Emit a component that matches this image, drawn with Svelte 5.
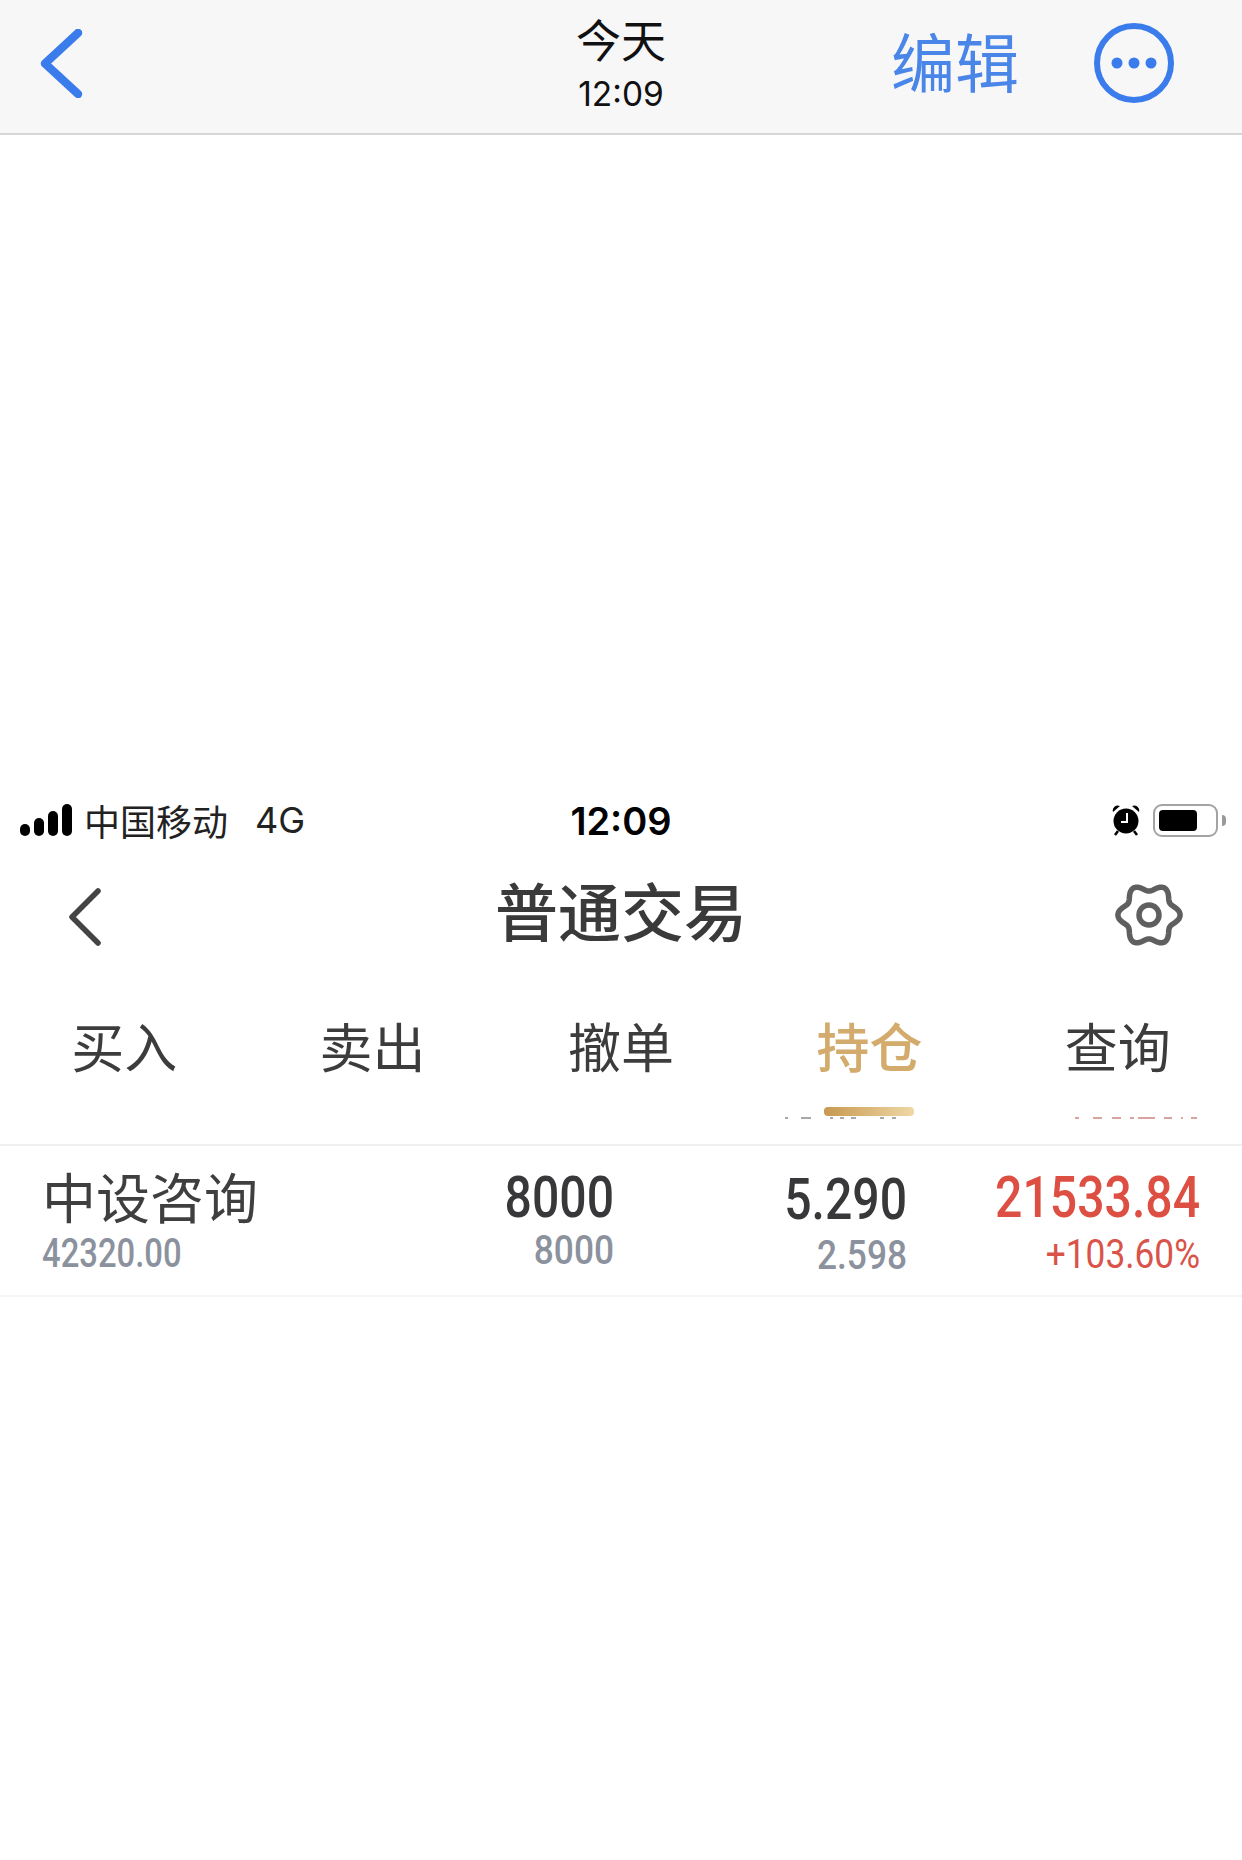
<script lang="ts">
  const tabs = ['买入', '卖出', '撤单', '持仓', '查询'];
  const activeTab = '持仓';

  // bottoms of a scrolled-away row, clipped by the tab bar: [x, width]
  const clippedGray = [[785, 3], [801, 10], [830, 3], [840, 4], [851, 5], [880, 4], [892, 4]];
  const clippedRed = [[1075, 4], [1093, 9], [1112, 9], [1130, 4], [1138, 17], [1164, 8], [1181, 2], [1191, 6]];

  // six soft lobes, one on each side
  let gearPoints = '';
  for (let i = 0; i < 180; i++) {
    const a = (i / 180) * Math.PI * 2;
    const r = 27.5 + 3.6 * Math.cos(6 * a);
    gearPoints += `${(34 + r * Math.cos(a)).toFixed(2)},${(32 + r * Math.sin(a)).toFixed(2)} `;
  }
</script>

<div class="page">
  <header class="msg-bar">
    <div class="left">
      <svg class="msg-back" viewBox="0 0 43 69" aria-hidden="true">
        <path d="M38 4 L5 34.5 L38 65" />
      </svg>
    </div>
    <div class="msg-title">
      <div class="today">今天</div>
      <div class="msg-time">12:09</div>
    </div>
    <div class="right">
      <span class="edit">编辑</span>
      <svg class="more" viewBox="0 0 80 80" aria-hidden="true">
        <circle class="ring" cx="40" cy="40" r="37" />
        <circle cx="23" cy="40" r="5.5" />
        <circle cx="40" cy="40" r="5.5" />
        <circle cx="57" cy="40" r="5.5" />
      </svg>
    </div>
  </header>

  <div class="blank"></div>

  <div class="status">
    <div class="left carrier">
      <span class="signal">
        <i style="height:12px"></i>
        <i style="height:18px"></i>
        <i style="height:25px"></i>
        <i style="height:32px"></i>
      </span>
      <span class="carrier-name">中国移动</span>
      <span class="net">4G</span>
    </div>
    <div class="clock">12:09</div>
    <div class="right status-icons">
      <svg class="alarm" viewBox="0 0 28 32" aria-hidden="true">
        <path d="M1 8 A5 5 0 0 1 8 2 Z M27 8 A5 5 0 0 0 20 2 Z" />
        <path class="feet" d="M6 27 L3 31 M22 27 L25 31" />
        <circle cx="14" cy="17" r="12.5" />
        <path class="hands" d="M15 9 V18 H9" />
      </svg>
      <span class="battery"><i></i></span>
      <span class="nub"></span>
    </div>
  </div>

  <nav class="nav">
    <div class="left">
      <svg class="nav-back" viewBox="0 0 32 58" aria-hidden="true">
        <path d="M29 3 L3 29 L29 55" />
      </svg>
    </div>
    <h1>普通交易</h1>
    <div class="right">
      <svg class="gear" viewBox="0 0 68 64" aria-hidden="true">
        <polygon points={gearPoints} />
        <circle cx="34" cy="32" r="10" />
      </svg>
    </div>
  </nav>

  <div class="tabs">
    {#each tabs as tab}
      <div class="tab" class:active={tab === activeTab}>
        <span>{tab}</span>
        {#if tab === activeTab}
          <i class="underline"></i>
        {/if}
      </div>
    {/each}
    <svg class="clipped" viewBox="0 0 1242 3" aria-hidden="true">
      {#each clippedGray as [x, w]}
        <rect {x} y="0" width={w} height="2" fill="#a9a9ad" />
      {/each}
      {#each clippedRed as [x, w]}
        <rect {x} y="0" width={w} height="2" fill="#d9a3a0" />
      {/each}
    </svg>
  </div>

  <div class="row">
    <div class="cell name-cell">
      <div class="name">中设咨询</div>
      <div class="sub amount">42320.00</div>
    </div>
    <div class="cell num">
      <div class="main">8000</div>
      <div class="sub">8000</div>
    </div>
    <div class="cell num price">
      <div class="main">5.290</div>
      <div class="sub">2.598</div>
    </div>
    <div class="cell num profit">
      <div class="main">21533.84</div>
      <div class="sub">+103.60%</div>
    </div>
  </div>
</div>

<style>
  :global(body) {
    margin: 0;
    background: #fff;
  }

  .page {
    width: 1242px;
    height: 1860px;
    overflow: hidden;
    font-family: "Noto Sans CJK SC", "Noto Sans", sans-serif;
    color: #3a3a3a;
  }

  .msg-bar,
  .status,
  .nav {
    display: grid;
    grid-template-columns: 1fr auto 1fr;
    align-items: center;
  }

  .left {
    display: flex;
    align-items: center;
  }

  .right {
    display: flex;
    align-items: center;
    justify-content: flex-end;
  }

  /* message header */
  .msg-bar {
    box-sizing: border-box;
    height: 135px;
    padding-bottom: 7px;
    background: #f7f7f8;
    border-bottom: 2px solid #d6d6d8;
  }

  .msg-bar .left {
    padding-left: 40px;
  }

  .msg-back {
    width: 43px;
    height: 69px;
  }

  .msg-back path {
    fill: none;
    stroke: #3b7cec;
    stroke-width: 8.5;
    stroke-linecap: round;
    stroke-linejoin: round;
  }

  .msg-title {
    padding-top: 3px;
    text-align: center;
    color: #111;
  }

  .today {
    font-size: 45px;
    line-height: 46px;
  }

  .msg-time {
    font-family: Inter, "Liberation Sans", sans-serif;
    font-size: 33.5px;
    line-height: 38px;
    margin-top: 13px;
  }

  .edit {
    font-size: 64px;
    line-height: 70px;
    color: #4a86e8;
    margin: 0 75px 9px 0;
  }

  .more {
    width: 80px;
    height: 80px;
    margin-right: 68px;
    fill: #3b7cec;
  }

  .ring {
    fill: none;
    stroke: #3b7cec;
    stroke-width: 6;
  }

  .blank {
    height: 655px;
  }

  /* phone status bar */
  .status {
    height: 60px;
    color: #000;
  }

  .carrier {
    padding-left: 20px;
  }

  .signal {
    display: flex;
    align-items: flex-end;
    gap: 4px;
    height: 32px;
  }

  .signal i {
    width: 10px;
    border-radius: 5px;
    background: #000;
  }

  .carrier-name {
    font-size: 36px;
    line-height: 40px;
    margin-left: 12px;
    color: #222;
  }

  .net {
    font-family: Inter, "Liberation Sans", sans-serif;
    font-size: 36px;
    margin-left: 27px;
    color: #222;
  }

  .clock {
    font-family: Inter, "Liberation Sans", sans-serif;
    font-size: 38px;
    line-height: 44px;
    font-weight: 600;
    margin-top: 2px;
  }

  .status-icons {
    padding-right: 16px;
  }

  .alarm {
    width: 28px;
    height: 32px;
    margin-right: 13px;
  }

  .alarm .feet {
    stroke: #000;
    stroke-width: 2.5;
  }

  .alarm .hands {
    fill: none;
    stroke: #fff;
    stroke-width: 2;
  }

  .battery {
    box-sizing: border-box;
    width: 65px;
    height: 33px;
    padding: 4px;
    border: 2.5px solid #a3a3a3;
    border-radius: 9px;
  }

  .battery i {
    display: block;
    width: 38px;
    height: 100%;
    border-radius: 4px;
    background: #000;
  }

  .nub {
    width: 4px;
    height: 11px;
    margin-left: 4px;
    border-radius: 0 4px 4px 0;
    background: #9a9a9a;
  }

  /* trade nav */
  .nav {
    height: 130px;
  }

  .nav .left {
    padding: 3px 0 0 69px;
  }

  .nav-back {
    width: 32px;
    height: 58px;
  }

  .nav-back path {
    fill: none;
    stroke: #444;
    stroke-width: 5.5;
    stroke-linecap: round;
    stroke-linejoin: round;
  }

  h1 {
    margin: 0 0 12px;
    font-size: 63px;
    line-height: 70px;
    font-weight: 500;
    color: #3a3a3a;
  }

  .gear {
    width: 68px;
    height: 64px;
    margin-right: 59px;
    fill: none;
    stroke: #5f5f5f;
    stroke-width: 5.5;
    stroke-linejoin: round;
  }

  /* tabs */
  .tabs {
    position: relative;
    display: grid;
    grid-template-columns: repeat(5, 1fr);
    height: 164px;
    border-bottom: 2px solid #f0f0f1;
  }

  .tab {
    position: relative;
    padding-top: 32px;
    text-align: center;
    font-size: 53px;
    line-height: 66px;
    color: #3c3c3c;
  }

  .tab.active {
    color: #d3ab6c;
    font-weight: 500;
  }

  .underline {
    position: absolute;
    left: 50%;
    top: 127px;
    width: 90px;
    height: 9px;
    margin-left: -45px;
    border-radius: 4px;
    background: linear-gradient(90deg, #c8984f, #eed8a6);
  }

  .clipped {
    position: absolute;
    left: 0;
    top: 137px;
    width: 1242px;
    height: 3px;
  }

  /* holding row, digits squeezed to the app's condensed number face */
  .row {
    display: grid;
    grid-template-columns: 359px 213px 293px 293px;
    height: 149px;
    padding-left: 42px;
    border-bottom: 2px solid #f5f5f6;
    font-family: Roboto, "Liberation Sans", sans-serif;
  }

  .name {
    font-family: "Noto Sans CJK SC", sans-serif;
    font-size: 54px;
    line-height: 60px;
    margin: 20px 0 0;
    color: #3f3f3f;
  }

  .num {
    text-align: right;
  }

  .main,
  .sub {
    transform-origin: right center;
  }

  .main {
    transform: scaleX(0.83);
    font-size: 58px;
    line-height: 50px;
    margin-top: 26px;
    font-weight: 500;
    color: #38383b;
  }

  .sub {
    transform: scaleX(0.86);
    font-size: 41px;
    line-height: 36px;
    margin-top: 10px;
    font-weight: 500;
    color: #8b929e;
  }

  .amount {
    margin-top: 9px;
    transform: scaleX(0.8);
    transform-origin: left center;
  }

  .price .main {
    margin-top: 28px;
  }

  .price .sub {
    margin-top: 13px;
  }

  .profit .main {
    margin-top: 26px;
    color: #dd4f42;
  }

  .profit .sub {
    margin-top: 14px;
    font-weight: 400;
    transform: scaleX(0.86);
    color: #d9534a;
  }
</style>
